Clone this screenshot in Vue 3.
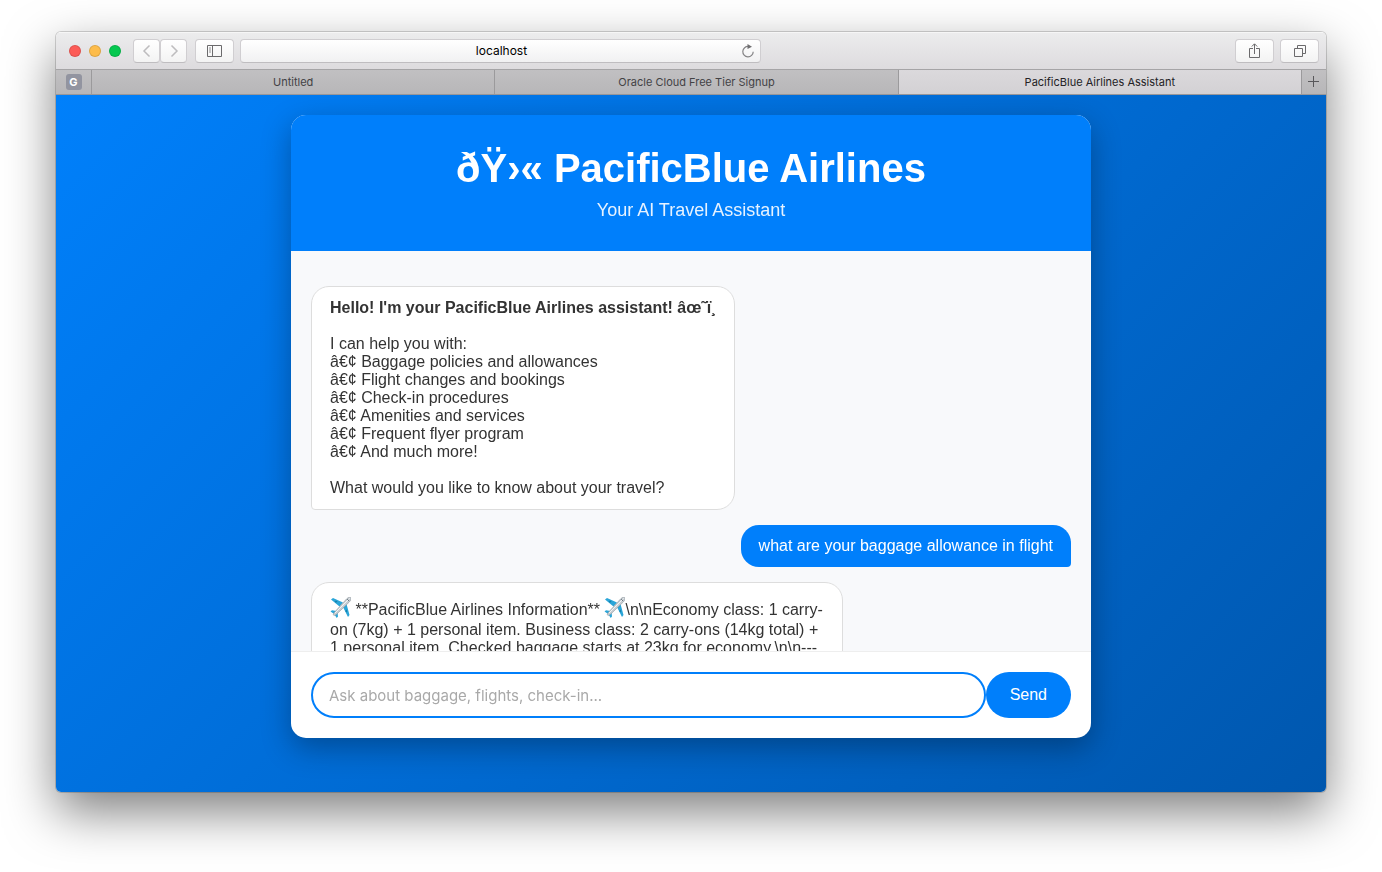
<script setup>
import { ref } from 'vue'

const draft = ref('')
const tabs = [
  { title: 'Untitled', active: false },
  { title: 'Oracle Cloud Free Tier Signup', active: false },
  { title: 'PacificBlue Airlines Assistant', active: true },
]
const topics = [
  'Baggage policies and allowances',
  'Flight changes and bookings',
  'Check-in procedures',
  'Amenities and services',
  'Frequent flyer program',
  'And much more!',
]
const reply = [
  { plane: true },
  { text: ' **PacificBlue Airlines Information** ' },
  { plane: true },
  { text: '\\n\\nEconomy class: 1 carry-on (7kg) + 1 personal item. Business class: 2 carry-ons (14kg total) + 1 personal item. Checked baggage starts at 23kg for economy.\\n\\n---' },
]
</script>

<template>
  <div class="desktop">
    <div class="window">
      <header class="toolbar">
        <div class="lights">
          <button class="light red" aria-label="Close"></button>
          <button class="light amber" aria-label="Minimise"></button>
          <button class="light green" aria-label="Full screen"></button>
        </div>
        <div class="nav">
          <button class="tool" aria-label="Back">
            <svg width="16" height="16" viewBox="0 0 16 16"><path d="M10.5 2.500 5 8l5.500 5.500" fill="none" stroke="#bdbcbe" stroke-width="1.500" /></svg>
          </button>
          <button class="tool" aria-label="Forward">
            <svg width="16" height="16" viewBox="0 0 16 16"><path d="M5.500 2.500 11 8l-5.500 5.500" fill="none" stroke="#bdbcbe" stroke-width="1.500" /></svg>
          </button>
        </div>
        <button class="tool wide" aria-label="Show sidebar">
          <svg width="16" height="14" viewBox="0 0 16 14"><path d="M.5 1.500h14v11H.5zM5.500 1.500v11" fill="none" stroke="#6b6a6c" /><path d="M2 4h2M2 6h2M2 8h2" stroke="#8b8a8c" /></svg>
        </button>
        <div class="address">
          <input class="url" type="text" value="localhost" aria-label="Address" />
          <button class="reload" aria-label="Reload">
            <svg width="14" height="14" viewBox="0 0 14 14"><path d="M7.500 2.500A5.200 5.200 0 1 0 12.200 7.700" fill="none" stroke="#858486" stroke-width="1.200" /><path d="M6.500 0 11 2.700 6.500 5z" fill="#6f6e70" /></svg>
          </button>
        </div>
        <div class="actions">
          <button class="tool wide" aria-label="Share">
            <svg width="14" height="18" viewBox="0 0 14 18"><path d="M5 6.500H1.500v9h10v-9H8M6.500 12V2M3.800 4.500 6.500 1.800l2.700 2.700" fill="none" stroke="#6b6a6c" /></svg>
          </button>
          <button class="tool wide" aria-label="Show all tabs">
            <svg width="14" height="14" viewBox="0 0 14 14"><path d="M1.500 4.500h8v8h-8zM4.500 4.500v-3h8v8h-3" fill="none" stroke="#6b6a6c" /></svg>
          </button>
        </div>
      </header>

      <nav class="tabs">
        <a class="pinned" href="#" aria-label="Pinned tab"><span class="favicon">G</span></a>
        <a v-for="tab in tabs" :key="tab.title" class="tab" :class="{ active: tab.active }" href="#">{{ tab.title }}</a>
        <button class="add" aria-label="New tab">
          <svg width="12" height="12" viewBox="0 0 12 12"><path d="M5.500 0v11M0 5.500h11" stroke="#58575a" /></svg>
        </button>
      </nav>

      <main class="page">
        <section class="card">
          <div class="banner">
            <h1>ðŸ›« PacificBlue Airlines</h1>
            <p>Your AI Travel Assistant</p>
          </div>
          <div class="log">
            <div class="message bot">
              <strong>Hello! I'm your PacificBlue Airlines assistant! âœ˜ï¸</strong><br /><br />
              I can help you with:<br />
              <template v-for="topic in topics" :key="topic">â€¢ {{ topic }}<br /></template>
              <br />
              What would you like to know about your travel?
            </div>
            <div class="message user">what are your baggage allowance in flight</div>
            <div class="message bot">
              <template v-for="(part, i) in reply" :key="i"><svg v-if="part.plane" class="plane" viewBox="0 0 21 21" role="img" aria-label="airplane"><path d="M1 2.500 3 1l10 4.500-3.500 4zM19.500 18l-1.500 2-5-10 3.500-3z" fill="#2aa5d8" /><path d="M.5 14.500 2 13.300l4.500.7 1 1 .5 4.500L6.700 21l-2.500-4z" fill="#2aa5d8" /><path d="M4.500 4.800 6 3.600l1.500.8L6 5.700zM15.300 14l1.200-1.400.9 1.600-1.200 1.200z" fill="#1682ad" /><path d="M20.500.5c1 1 .2 3-1.200 4.500L6.500 17.300c-1 .9-2.500 1.500-3 .8-.5-.6.1-1.900 1-2.800L16.500 2C18 .5 19.700-.2 20.500.5z" fill="#c8ced3" stroke="#8b959c" stroke-width=".6" /><path d="M19.600 1.400 5 16" stroke="#f2f5f6" stroke-width="1" /><path d="m17.300 2.200 1.600 1.500" stroke="#46545f" /></svg><template v-else>{{ part.text }}</template></template>
            </div>
          </div>
          <form class="composer" @submit.prevent>
            <input v-model="draft" type="text" aria-label="Message" placeholder="Ask about baggage, flights, check-in..." />
            <button type="submit">Send</button>
          </form>
        </section>
      </main>
    </div>
  </div>
</template>

<style>
body {
  background: #fff;
}
</style>

<style scoped>
* {
  box-sizing: border-box;
}
button {
  font: inherit;
  padding: 0;
  border: 0;
}
a {
  color: inherit;
  text-decoration: none;
}
svg {
  display: block;
}
.desktop {
  display: flex;
  min-height: 100vh;
  padding: 32px 56px 80px;
  overflow: hidden;
  font-family: "Liberation Sans", Arial, sans-serif;
}
.window {
  flex: 1;
  min-width: 0;
  display: flex;
  flex-direction: column;
  border-radius: 5px;
  overflow: hidden;
  box-shadow: 0 0 0 1px rgba(0, 0, 0, 0.16), 0 20px 50px rgba(0, 0, 0, 0.5);
}
.toolbar {
  display: flex;
  align-items: center;
  height: 37px;
  padding: 0 7px 0 13px;
  background: linear-gradient(#ececed, #dddbde);
  border-top: 1px solid #f6f6f6;
  font-family: Inter, sans-serif;
}
.lights {
  display: flex;
  gap: 8px;
  margin-right: 12px;
}
.light {
  width: 12px;
  height: 12px;
  border-radius: 50%;
  border: 1px solid rgba(0, 0, 0, 0.12);
}
.red { background: #fc5b57; }
.amber { background: #fdbc4b; }
.green { background: #05c850; }
.nav {
  display: flex;
  margin-right: 8px;
}
.tool {
  display: flex;
  align-items: center;
  justify-content: center;
  width: 27px;
  height: 24px;
  border: 1px solid #d0ced1;
  border-bottom-color: #bfbdc0;
  border-radius: 4px;
  background: linear-gradient(#fff, #f3f3f3);
}
.tool.wide {
  width: 39px;
}
.address {
  display: flex;
  align-items: center;
  flex: 0 1 521px;
  height: 24px;
  margin-left: 6px;
  padding: 0 5px 0 21px;
  border: 1px solid #d0ced1;
  border-bottom-color: #bfbdc0;
  border-radius: 4px;
  background: linear-gradient(#fff, #f1f1f2);
}
.url {
  flex: 1;
  min-width: 0;
  padding: 0;
  border: 0;
  outline: 0;
  background: none;
  text-align: center;
  font: 12px/16px Inter, sans-serif;
  color: #000;
}
.reload {
  background: none;
}
.actions {
  display: flex;
  gap: 6px;
  margin-left: auto;
}
.tabs {
  display: flex;
  height: 26px;
  border-top: 1px solid #a5a4a6;
  border-bottom: 1px solid #98979a;
  background: linear-gradient(#c1c0c2, #b7b6b8);
  font: 11px/24px Inter, sans-serif;
  color: #434245;
}
.pinned {
  display: flex;
  align-items: center;
  justify-content: center;
  width: 35px;
}
.favicon {
  width: 16px;
  height: 16px;
  border-radius: 3px;
  background: #9294a0;
  color: #fff;
  font-weight: 700;
  line-height: 16px;
  text-align: center;
}
.tab {
  flex: 1;
  border-left: 1px solid #9b9a9c;
  text-align: center;
  white-space: nowrap;
  overflow: hidden;
}
.tab.active {
  background: linear-gradient(#dbd9dc, #d3d1d4);
  color: #232225;
}
.add {
  display: flex;
  align-items: center;
  justify-content: center;
  width: 25px;
  border-left: 1px solid #9b9a9c;
  background: none;
}
.page {
  flex: 1;
  padding: 20px 20px 54px;
  background: linear-gradient(135deg, #0080fb, #0057ae);
}
.card {
  max-width: 800px;
  margin: 0 auto;
  border-radius: 15px;
  overflow: hidden;
  background: #fff;
  box-shadow: 0 10px 30px rgba(0, 0, 0, 0.3);
}
.banner {
  padding: 30px;
  background: #007ffb;
  color: #fff;
  text-align: center;
}
h1 {
  margin: 0 0 8px;
  font-size: 40px;
  line-height: 46px;
}
.banner p {
  margin: 0;
  font-size: 18px;
  line-height: 22px;
  opacity: 0.9;
}
.log {
  display: flex;
  flex-direction: column;
  max-height: 400px;
  padding: 20px;
  overflow-y: auto;
  scrollbar-width: none;
  background: #f8f9fb;
}
.message {
  flex: none;
  max-width: 70%;
  margin-top: 15px;
  padding: 12px 18px;
  font-size: 16px;
  line-height: 18px;
}
.bot {
  align-self: flex-start;
  border: 1px solid #ddd;
  border-radius: 18px 18px 18px 4px;
  background: #fff;
  color: #333;
}
.user {
  align-self: flex-end;
  border-radius: 18px 18px 4px 18px;
  background: #007ffb;
  color: #fff;
}
.plane {
  display: inline-block;
  width: 21px;
  height: 26px;
  padding: 2px 0 3px;
  vertical-align: -6px;
}
.composer {
  display: flex;
  padding: 20px;
  border-top: 1px solid #eee;
}
.composer input {
  flex: 1;
  min-width: 0;
  height: 46px;
  padding: 0 16px;
  border: 2px solid #007ffb;
  border-radius: 23px;
  outline: 0;
  background: #fff;
  font: 15px Inter, sans-serif;
  color: #333;
}
.composer input::placeholder {
  color: #a9a9a9;
  opacity: 1;
}
.composer button {
  padding: 0 24px;
  border-radius: 23px;
  background: #007ffb;
  color: #fff;
  font-size: 16px;
}
</style>
